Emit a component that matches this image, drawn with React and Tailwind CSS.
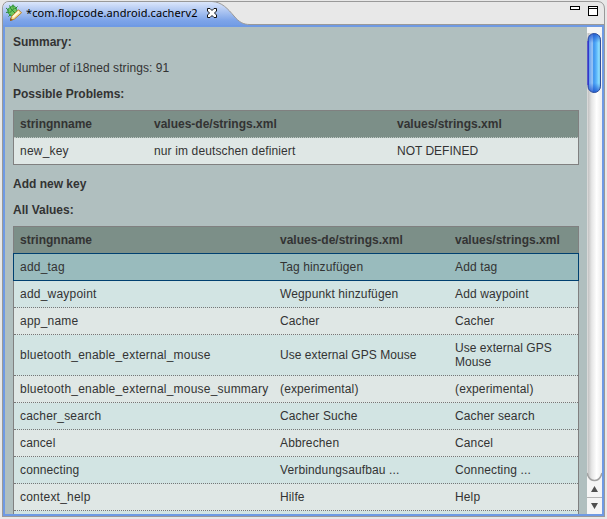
import React from "react";

const problems = [["new_key", "nur im deutschen definiert", "NOT DEFINED"]];

const values = [
  ["add_tag", "Tag hinzufügen", "Add tag"],
  ["add_waypoint", "Wegpunkt hinzufügen", "Add waypoint"],
  ["app_name", "Cacher", "Cacher"],
  ["bluetooth_enable_external_mouse", "Use external GPS Mouse", "Use external GPS Mouse"],
  ["bluetooth_enable_external_mouse_summary", "(experimental)", "(experimental)"],
  ["cacher_search", "Cacher Suche", "Cacher search"],
  ["cancel", "Abbrechen", "Cancel"],
  ["connecting", "Verbindungsaufbau ...", "Connecting ..."],
  ["context_help", "Hilfe", "Help"],
  ["", "", ""],
];

// Keys are set slightly looser than the translated texts; capitals keep their natural width.
function tracking(text, header) {
  if (header || text === "NOT DEFINED") return "tracking-normal";
  if (text.includes("_")) return "tracking-[0.21px]";
  if (text.includes("GPS")) return "tracking-[0.05px]";
  return "tracking-[0.13px]";
}

function Row({ cells, cols, className, header = false }) {
  return (
    <div className={`grid items-center px-1.5 ${cols} ${className}`}>
      {cells.map((c, i) => (
        <div key={i} className={`whitespace-nowrap last:whitespace-normal last:pr-2 ${tracking(c, header)}`}>{c}</div>
      ))}
    </div>
  );
}

function TabBar() {
  return (
    <header className="relative h-[27px] shrink-0">
      <svg className="absolute inset-0" width="607" height="27" viewBox="0 0 607 27">
        <defs>
          <linearGradient id="tab" x1="0" y1="0" x2="0" y2="1">
            <stop offset="0" stopColor="#dbe6fb" />
            <stop offset="0.3" stopColor="#b5cbf3" />
            <stop offset="0.75" stopColor="#7ca3e8" />
            <stop offset="1" stopColor="#6f9ae4" />
          </linearGradient>
        </defs>
        <path d="M2.5 27V8Q3 1.5 9 1.5H598Q604.5 2 604.5 9V27Z" fill="#e8e8e8" stroke="#999" />
        <path d="M3 27V8Q4 2 9 2H212C222 2 228 9 234 16C239 22 243 24.500 250 24.500H602V27Z" fill="url(#tab)" />
        <path d="M212 1.500C222 2 228 9 234 16C239 22 243 24.500 250 24.500H602" fill="none" stroke="#999" />
        <path d="M3 25H604V27H3Z" fill="#6f9ae4" />
        <path d="M250 24.500H604" stroke="#999" />
        <g>
          <path d="M7.500 9.500L10 7.500L12.500 5.500L15 6.500L16.500 8.500L17 12L14.500 15L11 16L8.500 13.500Z" fill="#6fc45c" stroke="#3d9c48" />
          <path d="M6 8L9 10.500M9.500 5.500L11 8.500M13 4.500V7.500M17.500 6.500L15 9M6 12.500L9 12M8.500 16.500L10.500 14.500M10.500 8.500L15.500 13.500M14.500 8L9.500 13" fill="none" stroke="#258b37" strokeWidth="1" />
          <path d="M10.500 20.500L11.500 16.500L18.500 9.800L21.500 12.800L14.500 19Z" fill="#f6df95" stroke="#b9802c" />
          <path d="M13 17L19 11.500" stroke="#fff9dc" strokeWidth="1.800" />
          <path d="M10 18L13 20L10 21Z" fill="#8d5a25" />
        </g>
        <path d="M207.500 8.500H210L212 10.500L214 8.500H216.500V11L214.500 13L216.500 15V17.500H214L212 15.500L210 17.500H207.500V15L209.500 13L207.500 11Z" fill="#fff" stroke="#111" />
        <rect x="570.500" y="6.500" width="9" height="3" fill="#fff" stroke="#000" />
        <rect x="588.500" y="6.500" width="9" height="9" fill="#fff" stroke="#000" />
        <path d="M588 8.500H598" stroke="#000" />
      </svg>
      <div className="relative pt-[5px] pl-[26px] font-['Noto_Sans',sans-serif] text-[11px] leading-4 tracking-[0.1px] whitespace-nowrap text-black">
        *com.flopcode.android.cacherv2
      </div>
    </header>
  );
}

function Scrollbar() {
  return (
    <svg className="shrink-0" width="15" height="487" viewBox="0 0 15 487">
      <defs>
        <linearGradient id="track" x1="0" x2="1" y1="0" y2="0">
          <stop offset="0" stopColor="#bdbdbd" />
          <stop offset="0.3" stopColor="#e6e6e6" />
          <stop offset="0.65" stopColor="#ffffff" />
          <stop offset="1" stopColor="#eeeeee" />
        </linearGradient>
        <linearGradient id="thumb" x1="0" x2="1" y1="0" y2="0">
          <stop offset="0" stopColor="#2a2bd0" />
          <stop offset="0.12" stopColor="#6aa0ee" />
          <stop offset="0.35" stopColor="#9cc6f5" />
          <stop offset="0.45" stopColor="#3e94ee" />
          <stop offset="0.65" stopColor="#58b2fa" />
          <stop offset="0.9" stopColor="#93e3ff" />
          <stop offset="1" stopColor="#4078b8" />
        </linearGradient>
        <linearGradient id="ends" x1="0" x2="0" y1="0" y2="1">
          <stop offset="0" stopColor="#1748c8" stopOpacity="0.75" />
          <stop offset="0.16" stopColor="#1748c8" stopOpacity="0" />
          <stop offset="0.84" stopColor="#1748c8" stopOpacity="0" />
          <stop offset="1" stopColor="#1748c8" stopOpacity="0.75" />
        </linearGradient>
      </defs>
      <rect width="15" height="487" fill="#f5f5f5" />
      <path d="M0.500 6H14.500V447Q12 453 7.500 453Q3 453 0.500 447Z" fill="url(#track)" transform="translate(0 0)" />
      <path d="M0 446Q2 453.500 7.500 453.500Q13 453.500 15 446" fill="none" stroke="#a2a2a2" strokeWidth="1.500" />
      <rect x="1" y="6.500" width="12.500" height="59" rx="6.200" fill="url(#thumb)" />
      <rect x="1" y="6.500" width="12.500" height="59" rx="6.200" fill="url(#ends)" stroke="#304f9c" />
      <path d="M1 14V58" stroke="#2b20d8" />
      <path d="M0 470.500H15" stroke="#b5b5b5" />
      <path d="M4 465L7.500 459L11 465Z M4 476L7.500 482L11 476Z" fill="#505050" />
    </svg>
  );
}

const head = "h-[26px] bg-[#7c8f88] font-bold";
const dotted = "border-b border-dotted border-[#777]";

export default function App() {
  return (
    <div className="h-[519px] w-[607px] overflow-hidden bg-[#e8e8e8] font-['Liberation_Sans',Arial,sans-serif] text-[12px] leading-[14px] text-[#333]">
      <div className="flex h-[517px] flex-col">
        <TabBar />
        <div className="mr-[2px] ml-[2px] flex min-h-0 flex-1 border-x border-b border-[#999]">
          <div className="flex min-w-0 flex-1 border-x-2 border-b-2 border-[#6f9ae4] bg-[#b0bfbf]">
            <main className="w-[582px] shrink-0 overflow-hidden pt-2 pl-2">
              <h2 className="mb-3 font-bold">Summary:</h2>
              <p className="mb-3 tracking-[0.08px]">Number of i18ned strings: 91</p>
              <h2 className="mb-[9px] font-bold">Possible Problems:</h2>
              <div className="mb-3 w-[566px] border border-[#808080]">
                <Row header cells={["stringnname", "values-de/strings.xml", "values/strings.xml"]} cols="grid-cols-[134px_243px_1fr]" className="h-[27px] border-b border-dotted border-[#bcc6c3] bg-[#7c8f88] font-bold" />
                {problems.map((r) => (
                  <Row key={r[0]} cells={r} cols="grid-cols-[134px_243px_1fr]" className="h-[26px] bg-[#dfe7e5]" />
                ))}
              </div>
              <h2 className="mb-3 font-bold">Add new key</h2>
              <h2 className="mb-[9px] font-bold">All Values:</h2>
              <div className="w-[566px] border border-[#808080]">
                <Row header cells={["stringnname", "values-de/strings.xml", "values/strings.xml"]} cols="grid-cols-[260px_175px_1fr]" className={head} />
                {values.map((r, i) => (
                  <Row
                    key={i}
                    cells={r}
                    cols="grid-cols-[260px_175px_1fr]"
                    className={
                      i === 0
                        ? "relative -mx-px h-7 border border-[#004070] bg-[#99bbbd]"
                        : `${i === 3 ? "h-[41px]" : "h-[27px]"} ${dotted} ${[1, 3, 5, 7, 9].includes(i) ? "bg-[#d2e4e3]" : "bg-[#dfe7e5]"}`
                    }
                  />
                ))}
              </div>
            </main>
            <Scrollbar />
          </div>
        </div>
      </div>
    </div>
  );
}
